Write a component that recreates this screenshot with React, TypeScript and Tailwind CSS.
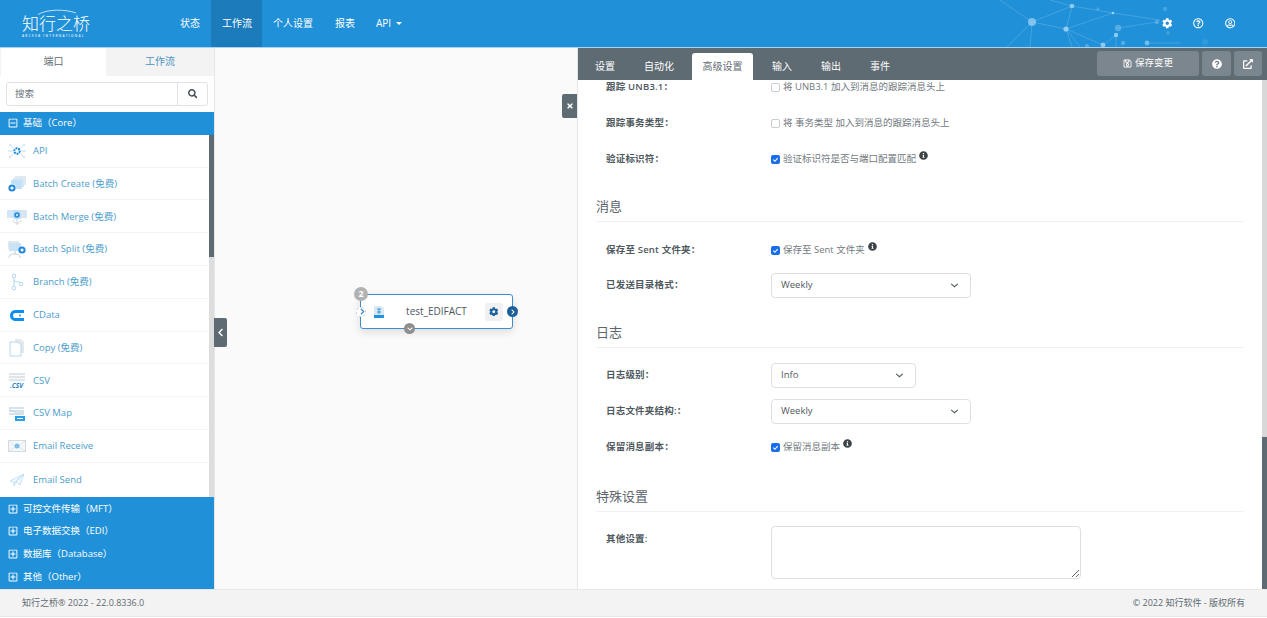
import type { ReactNode } from 'react';
import {
  FaChevronDown,
  FaChevronLeft,
  FaChevronRight,
  FaCog,
  FaExternalLinkAlt,
  FaInfoCircle,
  FaQuestionCircle,
  FaRegMinusSquare,
  FaRegPlusSquare,
  FaRegQuestionCircle,
  FaRegSave,
  FaRegUserCircle,
  FaSearch,
  FaTimes,
} from 'react-icons/fa';

const FONT = 'font-["Open_Sans","Noto_Sans_CJK_SC",sans-serif]';

const panelTabs = ['设置', '自动化', '高级设置', '输入', '输出', '事件'];

function ApiIcon() {
  return (
    <svg viewBox="0 0 20 16" className="h-4 w-5">
      <g stroke="#bcd8ec" strokeWidth="0.9">
        <path d="M10 8 3 2M10 8 17 2M10 8 3 14M10 8 17 14M10 8H1M10 8h9" />
      </g>
      <g fill="#d5e6f3">
        <circle cx="3" cy="2" r="1.2" />
        <circle cx="17" cy="2" r="1.2" />
        <circle cx="3" cy="14" r="1.2" />
        <circle cx="17" cy="14" r="1.2" />
      </g>
      <circle cx="10" cy="8" r="3.8" fill="#fff" />
      <circle cx="10" cy="8" r="2.7" fill="none" stroke="#1e90e0" strokeWidth="2" strokeDasharray="2 0.7" />
    </svg>
  );
}

function BatchCreateIcon() {
  return (
    <svg viewBox="0 0 20 18" className="h-[18px] w-5">
      <rect x="8" y="1" width="11" height="9" fill="#e2e8ee" />
      <rect x="6" y="3" width="11" height="9" fill="#d3e7f6" />
      <rect x="4" y="5" width="11" height="9" fill="#c2e0f6" />
      <circle cx="5" cy="13" r="4.2" fill="#fff" />
      <circle cx="5" cy="13" r="2.6" fill="none" stroke="#1e88d8" strokeWidth="2" />
    </svg>
  );
}

function BatchMergeIcon() {
  return (
    <svg viewBox="0 0 20 18" className="h-[18px] w-5">
      <rect x="0" y="2" width="6" height="8" fill="#d3e7f6" />
      <rect x="6" y="2" width="8" height="9" fill="#c2e0f6" />
      <rect x="14" y="2" width="6" height="8" fill="#d9e4ec" />
      <circle cx="10" cy="7" r="2" fill="none" stroke="#1e88d8" strokeWidth="1.6" />
      <path d="M10 11v6M6 12c0 3 2 3 4 3s4 0 4-3" fill="none" stroke="#c4cdd4" strokeWidth="0.8" />
    </svg>
  );
}

function BatchSplitIcon() {
  return (
    <svg viewBox="0 0 20 19" className="h-[19px] w-5">
      <rect x="1" y="1" width="11" height="8" fill="#e2e8ee" />
      <rect x="2" y="3" width="12" height="8" fill="#c9e2f5" />
      <circle cx="15" cy="10" r="2.6" fill="none" stroke="#1e88d8" strokeWidth="2" />
      <path d="M2 18c0-4 3-4 6-4s5 0 5 4M8 11v3" fill="none" stroke="#b9c4cc" strokeWidth="0.8" />
    </svg>
  );
}

function BranchIcon() {
  return (
    <svg viewBox="0 0 14 18" className="h-[18px] w-[14px]">
      <g fill="none" stroke="#9fcdea" strokeWidth="0.8">
        <circle cx="4" cy="3" r="1.8" />
        <circle cx="4" cy="15" r="1.8" />
        <circle cx="11" cy="11" r="1.8" />
        <path d="M4 5v8M4 7c0 3 5 1 6 2.5" />
      </g>
    </svg>
  );
}

function CDataIcon() {
  return (
    <svg viewBox="0 0 14 11" className="h-[11px] w-[14px]">
      <path d="M14 1.5H5C3 1.5 1.5 3.2 1.5 5.5S3 9.5 5 9.5h9" fill="none" stroke="#0d8fef" strokeWidth="3" />
      <circle cx="10" cy="5.5" r="0.9" fill="#0d8fef" />
    </svg>
  );
}

function CopyIcon() {
  return (
    <svg viewBox="0 0 16 18" className="h-[18px] w-4">
      <path d="M6 0h6l3 3v11H6z" fill="#e6e8ea" />
      <path d="M1 3h8l3 3v11H1z" fill="#fff" stroke="#a9d5f2" strokeWidth="0.9" />
    </svg>
  );
}

function CsvIcon() {
  return (
    <svg viewBox="0 0 18 16" className="h-4 w-[18px]">
      <g fill="#dfe5ea">
        <rect x="1" y="0" width="16" height="2.2" />
        <rect x="1" y="3" width="16" height="2.2" />
        <rect x="1" y="6" width="16" height="2.2" />
      </g>
      <text x="2" y="14.5" fontSize="6.5" fontWeight="700" fontStyle="italic" fill="#1f7fc4" fontFamily="Open Sans">
        .CSV
      </text>
    </svg>
  );
}

function CsvMapIcon() {
  return (
    <svg viewBox="0 0 18 16" className="h-4 w-[18px]">
      <g fill="#d7e2ea">
        <rect x="1" y="1" width="15" height="2" />
        <rect x="1" y="4" width="15" height="2" />
        <rect x="1" y="7" width="15" height="2" />
      </g>
      <path d="M1 4c5 0 6 5 15 2" fill="none" stroke="#a8cfe9" strokeWidth="0.7" />
      <rect x="7" y="10" width="10" height="5" fill="#28a0e8" />
      <rect x="9" y="12" width="6" height="1" fill="#fff" />
    </svg>
  );
}

function EmailReceiveIcon() {
  return (
    <svg viewBox="0 0 18 12" className="h-3 w-[18px]">
      <rect x="0.5" y="0.5" width="17" height="11" fill="#f4f7f9" stroke="#d3dbe1" />
      <path d="M1 1l6 5M17 1l-6 5M1 11l6-4M17 11l-6-4" stroke="#d3dbe1" strokeWidth="0.6" />
      <circle cx="9" cy="6" r="2.5" fill="#7fbfe9" />
    </svg>
  );
}

function EmailSendIcon() {
  return (
    <svg viewBox="0 0 16 14" className="h-[14px] w-4">
      <path d="M1 8 15 1 11 12 7 9 5 13V9.5z" fill="#f4fafe" stroke="#b3dbf5" strokeWidth="0.8" strokeLinejoin="round" />
      <path d="M5 9.5 15 1 7 9" fill="none" stroke="#b3dbf5" strokeWidth="0.7" />
    </svg>
  );
}

const connectors: { name: string; free?: boolean; icon: ReactNode }[] = [
  { name: 'API', icon: <ApiIcon /> },
  { name: 'Batch Create', free: true, icon: <BatchCreateIcon /> },
  { name: 'Batch Merge', free: true, icon: <BatchMergeIcon /> },
  { name: 'Batch Split', free: true, icon: <BatchSplitIcon /> },
  { name: 'Branch', free: true, icon: <BranchIcon /> },
  { name: 'CData', icon: <CDataIcon /> },
  { name: 'Copy', free: true, icon: <CopyIcon /> },
  { name: 'CSV', icon: <CsvIcon /> },
  { name: 'CSV Map', icon: <CsvMapIcon /> },
  { name: 'Email Receive', icon: <EmailReceiveIcon /> },
  { name: 'Email Send', icon: <EmailSendIcon /> },
];

const collapsedGroups = ['可控文件传输（MFT）', '电子数据交换（EDI）', '数据库（Database）', '其他（Other）'];

function HeaderNetwork() {
  const nodes: [number, number, number, number][] = [
    [1032, 22, 4, 0.6],
    [1072, 6, 2.3, 0.7],
    [1066, 29, 2.6, 0.7],
    [1113, 13, 1.3, 0.8],
    [1116, 35, 2.2, 0.7],
    [1118, 28, 3.2, 0.35],
    [1098, 9, 1.8, 0.25],
    [1103, 45, 2.4, 0.7],
    [1147, 43, 2.4, 0.55],
    [1123, 43, 2.2, 0.35],
    [1087, 46, 2, 0.35],
    [1157, 22, 2.2, 0.3],
    [1165, 9, 2.2, 0.25],
    [1168, 33, 2, 0.2],
    [1205, 42, 3, 0.12],
  ];
  return (
    <svg viewBox="980 0 240 47" className="absolute top-0 left-[980px] h-[47px] w-[240px]">
      <g stroke="#ffffff" strokeOpacity="0.28" strokeWidth="0.6" fill="none">
        <path d="M1032 22 1072 6 1066 29ZM1072 6 1113 13M1066 29 1113 13M1066 29 1103 45M1066 29 1080 47M1066 29 1072 47M1032 22 1030 47M1032 22 1007 47M1032 22 1000 0M1050 0 1072 6M1116 35 1103 45M1116 35 1116 47M1118 28 1157 22M1147 43 1180 43M1113 13 1160 20" />
      </g>
      {nodes.map(([cx, cy, r, o]) => (
        <circle key={`${cx}-${cy}`} cx={cx} cy={cy} r={r} fill="#b5e0fa" fillOpacity={o} />
      ))}
    </svg>
  );
}

function Logo() {
  return (
    <div className="relative w-[70px] pt-[9px] text-white">
      <svg viewBox="0 0 40 6" className="absolute top-[9px] left-[15px] h-[6px] w-[40px]">
        <path d="M1 5.5C10 0 28 0 39 4" fill="none" stroke="#fff" strokeOpacity="0.9" strokeWidth="0.8" />
      </svg>
      <div className="mt-[5px] text-[17px] leading-[20px] font-extralight whitespace-nowrap">知行之桥</div>
      <div className="text-[3.2px] leading-[4px] font-semibold tracking-[1.25px] whitespace-nowrap opacity-90">ARCESB INTERNATIONAL</div>
    </div>
  );
}

function TopBar() {
  return (
    <header className="relative z-10 flex h-[47px] shrink-0 items-center bg-[#2090d8] text-white shadow-[0_1px_0_#a9d3ee]">
      <HeaderNetwork />
      <div className="relative ml-[22px] h-full w-[147px]">
        <Logo />
      </div>
      <nav className="relative flex h-full text-[10px]">
        <a className="flex h-full items-center px-[11px]">状态</a>
        <a className="flex h-full items-center bg-[#1c7cbb] pr-[10px] pl-[11px]">工作流</a>
        <a className="flex h-full items-center px-[11px]">个人设置</a>
        <a className="flex h-full items-center px-[11px]">报表</a>
        <a className="flex h-full items-center gap-[5px] px-[10px]">
          API
          <span className="h-0 w-0 border-x-[3px] border-t-[3px] border-x-transparent border-t-white" />
        </a>
      </nav>
      <div className="relative mr-[32px] ml-auto flex items-center gap-[21px] text-[10.5px]">
        <FaCog />
        <FaRegQuestionCircle />
        <FaRegUserCircle />
      </div>
    </header>
  );
}

function GroupHeader({ label, open }: { label: string; open?: boolean }) {
  return (
    <div className="flex h-[22.8px] items-center gap-[5px] pl-2 text-[9.5px] text-white">
      {open ? <FaRegMinusSquare className="text-[10px]" /> : <FaRegPlusSquare className="text-[10px]" />}
      <span>{label}</span>
    </div>
  );
}

function Sidebar() {
  return (
    <aside className="flex w-[215px] shrink-0 flex-col border-r border-[#e4e6e8] bg-white">
      <div className="flex h-[29px] shrink-0 bg-[#f3f3f3] pl-[1px] text-[10px]">
        <div className="flex w-[105px] items-center justify-center rounded-t-[3px] bg-white text-[#5f6a72]">端口</div>
        <div className="flex flex-1 items-center justify-center text-[#4d94c6]">工作流</div>
      </div>
      <div className="flex h-[36px] shrink-0 items-center px-[6px]">
        <div className="flex h-[24px] w-[202px] rounded-[3px] border border-[#dfe3e7] text-[9.5px] text-[#6b747b]">
          <span className="flex flex-1 items-center pl-2">搜索</span>
          <span className="flex w-[30px] items-center justify-center border-l border-[#dfe3e7] text-[#444f57]">
            <FaSearch className="text-[9.5px]" />
          </span>
        </div>
      </div>
      <div className="bg-[#2090d8]">
        <GroupHeader label="基础（Core）" open />
      </div>
      <div className="flex h-[362px] shrink-0">
        <ul className="min-w-0 flex-1">
          {connectors.map((c) => (
            <li
              key={c.name}
              className="flex h-[32.8px] items-center border-b border-[#f3f4f5] pt-[1px] last:border-b-0"
            >
              <span className="flex w-[33px] shrink-0 items-center justify-center pl-[1px]">{c.icon}</span>
              <span className="text-[9.5px] text-[#4b9ccb]">
                {c.name}
                {c.free ? ' (免费)' : ''}
              </span>
            </li>
          ))}
        </ul>
        <div className="w-[5px] shrink-0 bg-[#dddddd]">
          <div className="h-[122px] bg-[#5f6b73]" />
        </div>
      </div>
      <div className="flex-1 bg-[#2090d8] pt-[0.5px]">
        {collapsedGroups.map((g) => (
          <GroupHeader key={g} label={g} />
        ))}
      </div>
    </aside>
  );
}

function WorkflowNode() {
  return (
    <div className="relative flex h-[35px] w-[153px] items-center rounded-[3px] border border-[#3f8ecb] bg-white shadow-[0_3px_8px_rgba(0,0,0,0.12)]">
      <span className="absolute -top-[8px] -left-[7px] flex h-[14px] w-[14px] items-center justify-center rounded-full bg-[#b2b2b2] text-[9px] font-bold text-white">
        2
      </span>
      <span className="absolute top-[12px] -left-[5px] h-[10px] w-[10px] rounded-full border border-dashed border-[#cfd3d6] bg-white" />
      <span className="absolute top-[13px] -left-[2px] text-[7px] text-[#2a7fc0]">
        <FaChevronRight />
      </span>
      <svg viewBox="0 0 14 14" className="ml-[11px] h-[14px] w-[14px]">
        <path d="M2 1h7l3 2.5V13H2z" fill="#d9e8f3" />
        <rect x="2" y="10" width="10" height="3" fill="#1f93dc" />
        <path d="M5 4h4M7 4v5M5 7h4" stroke="#2d90d3" strokeWidth="0.9" fill="none" />
      </svg>
      <span className="flex-1 pl-[2px] text-center text-[10px] text-[#4e585f]">test_EDIFACT</span>
      <span className="mr-[9px] flex h-[18px] w-[18px] items-center justify-center rounded-[2px] bg-[#f0f1f2] text-[9.5px] text-[#1d5f99]">
        <FaCog />
      </span>
      <span className="absolute top-[11px] -right-[6px] flex h-[11px] w-[11px] items-center justify-center rounded-full bg-[#1d5f99] text-[6px] text-white">
        <FaChevronRight />
      </span>
      <span className="absolute -bottom-[6px] left-[43px] flex h-[11px] w-[11px] items-center justify-center rounded-full bg-[#8e8e8e] text-[6px] text-white">
        <FaChevronDown />
      </span>
    </div>
  );
}

function Canvas() {
  return (
    <main className="relative flex flex-1 items-start bg-[#fafafa] pt-[247px] pl-[145px]">
      <WorkflowNode />
      <button className="absolute top-[271px] -left-[1px] flex h-[29px] w-[13px] items-center justify-center rounded-r-[2px] bg-[#5f6b73] text-[9px] text-white">
        <FaChevronLeft />
      </button>
      <button className="absolute top-[47px] right-0 flex h-[24px] w-[15px] items-center justify-center rounded-l-[2px] bg-[#5f6b73] text-[8px] text-white">
        <FaTimes />
      </button>
    </main>
  );
}

function Check({ on }: { on?: boolean }) {
  return on ? (
    <span className="flex h-[9px] w-[9px] shrink-0 items-center justify-center rounded-[2px] bg-[#1a6dea]">
      <svg viewBox="0 0 8 8" className="h-[7px] w-[7px]">
        <path d="M1.5 4.2 3.3 6l3.2-3.6" fill="none" stroke="#fff" strokeWidth="1.2" />
      </svg>
    </span>
  ) : (
    <span className="h-[9px] w-[9px] shrink-0 rounded-[2px] border border-[#c9ced3] bg-white" />
  );
}

function Row({ label, children, className }: { label: string; children: ReactNode; className?: string }) {
  return (
    <div className={`flex h-[36px] items-center ${className ?? ''}`}>
      <label className="w-[175px] shrink-0 pl-[10px] text-[9.5px] font-semibold tracking-[0.2px] text-[#4f5960]">
        {label}
      </label>
      {children}
    </div>
  );
}

function CheckField({ on, text, info }: { on?: boolean; text: string; info?: boolean }) {
  return (
    <div className="flex items-center gap-[3px] text-[9.5px] text-[#727a80]">
      <Check on={on} />
      <span>{text}</span>
      {info && <FaInfoCircle className="mb-[8px] text-[9px] text-[#3c4348]" />}
    </div>
  );
}

function SelectBox({ value, width }: { value: string; width: string }) {
  return (
    <div className={`flex h-[25px] items-center justify-between rounded-[4px] border border-[#dde0e3] pr-[11px] pl-[9px] text-[9.5px] text-[#4f5960] ${width}`}>
      {value}
      <svg viewBox="0 0 10 6" className="h-[5px] w-[9px]">
        <path d="M1 1l4 3.5L9 1" fill="none" stroke="#4f5960" strokeWidth="1.3" />
      </svg>
    </div>
  );
}

function SectionTitle({ title, className }: { title: string; className?: string }) {
  return (
    <h3 className={`h-[29px] border-b border-[#f0f1f2] text-[13px] leading-[26px] font-normal text-[#5c656c] ${className ?? ''}`}>
      {title}
    </h3>
  );
}

function SettingsPanel() {
  return (
    <section className="flex w-[690px] shrink-0 flex-col border-l border-[#e4e6e8] bg-white">
      <div className="flex h-[33px] shrink-0 items-end bg-[#5f6b73] pl-[7px] text-[10px]">
        <div className="flex flex-1 gap-[9px]">
          {panelTabs.map((t) => (
            <div
              key={t}
              className={
                t === '高级设置'
                  ? 'flex h-[27px] items-center rounded-t-[3px] bg-white px-[10.5px] -ml-[1px] text-[#5f6b73]'
                  : 'flex h-[27px] items-center px-[10px] text-white'
              }
            >
              {t}
            </div>
          ))}
        </div>
        <div className="mr-[5px] flex gap-[3px] self-start pt-[4px] text-white">
          <button className="flex h-[25px] w-[102px] items-center justify-center gap-[3px] rounded-[3px] bg-[#7b868e] text-[9.5px]">
            <FaRegSave className="text-[9px]" />
            保存变更
          </button>
          <button className="flex h-[25px] w-[29px] items-center justify-center rounded-[3px] bg-[#7b868e] text-[10px]">
            <FaQuestionCircle />
          </button>
          <button className="flex h-[25px] w-[28px] items-center justify-center rounded-[3px] bg-[#7b868e] text-[10px]">
            <FaExternalLinkAlt />
          </button>
        </div>
      </div>
      <div className="flex min-h-0 flex-1">
        <div className="min-w-0 flex-1 overflow-hidden pr-[18px] pl-[18px]">
          <div className="-mt-[11px]">
            <Row label="跟踪 UNB3.1：">
              <CheckField text="将 UNB3.1 加入到消息的跟踪消息头上" />
            </Row>
            <Row label="跟踪事务类型：">
              <CheckField text="将 事务类型 加入到消息的跟踪消息头上" />
            </Row>
            <Row label="验证标识符：">
              <CheckField on text="验证标识符是否与端口配置匹配" info />
            </Row>
            <SectionTitle title="消息" className="mt-[16px]" />
            <Row label="保存至 Sent 文件夹：" className="mt-[10px]">
              <CheckField on text="保存至 Sent 文件夹" info />
            </Row>
            <Row label="已发送目录格式：" className="-mt-[1px]">
              <SelectBox value="Weekly" width="w-[200px]" />
            </Row>
            <SectionTitle title="日志" className="mt-[16px]" />
            <Row label="日志级别：" className="mt-[9px]">
              <SelectBox value="Info" width="w-[145px]" />
            </Row>
            <Row label="日志文件夹结构:：">
              <SelectBox value="Weekly" width="w-[200px]" />
            </Row>
            <Row label="保留消息副本：">
              <CheckField on text="保留消息副本" info />
            </Row>
            <SectionTitle title="特殊设置" className="mt-[18px]" />
            <div className="mt-[14px] flex">
              <label className="w-[175px] shrink-0 pt-[6px] pl-[10px] text-[9.5px] font-semibold tracking-[0.2px] text-[#4f5960]">
                其他设置:
              </label>
              <textarea className="h-[53px] w-[310px] rounded-[4px] border border-[#dde0e3] bg-white" readOnly />
            </div>
          </div>
        </div>
        <div className="flex w-[5px] shrink-0 flex-col bg-[#d8d8d8]">
          <div className="mt-auto h-[152px] bg-[#5f6b73]" />
        </div>
      </div>
    </section>
  );
}

export default function App() {
  return (
    <div className={`flex h-[618px] w-[1267px] flex-col overflow-hidden bg-white ${FONT}`}>
      <TopBar />
      <div className="flex min-h-0 flex-1">
        <Sidebar />
        <Canvas />
        <SettingsPanel />
      </div>
      <footer className="mb-[1px] flex h-[28px] shrink-0 items-center justify-between border-t border-b border-[#e8e8e8] bg-[#f3f3f3] pr-[22px] pl-[22px] text-[9px] text-[#5f6a72]">
        <span>知行之桥® 2022 - 22.0.8336.0</span>
        <span>© 2022 知行软件 - 版权所有</span>
      </footer>
    </div>
  );
}
